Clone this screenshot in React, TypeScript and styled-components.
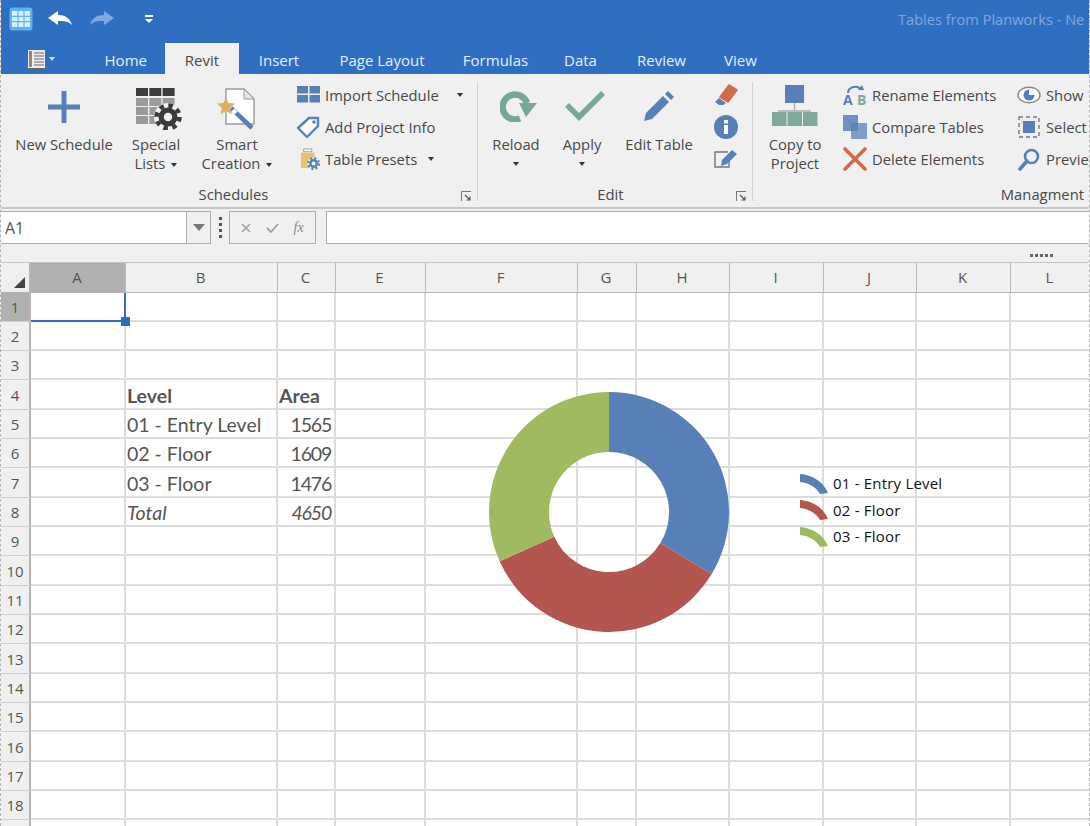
import { styled, createGlobalStyle } from "styled-components";

const GlobalStyle = createGlobalStyle`
  html, body {
    margin: 0;
    padding: 0;
    background: #fff;
  }
  * {
    box-sizing: border-box;
  }
`;

const BLUE = "#5880b6";
const GREEN = "#76a893";

const Window = styled.div`
  width: 1090px;
  height: 826px;
  overflow: hidden;
  display: flex;
  flex-direction: column;
  position: relative;
  border-left: 1px dashed #b4b4b4;
  border-right: 1px dashed #b4b4b4;
  font-family: "Open Sans", "Liberation Sans", sans-serif;
  color: #484848;
`;

const QuickBar = styled.div`
  height: 42px;
  flex: none;
  background: #2f6fc2;
  display: flex;
  align-items: center;
  padding: 0 0 4px 8px;
`;

const QuickSlot = styled.div<{ $w: number }>`
  width: ${(p) => p.$w}px;
  flex: none;
  display: flex;
  align-items: center;
`;

const TitleText = styled.div`
  margin-left: auto;
  width: 191px;
  white-space: nowrap;
  font-size: 14.6px;
  color: #7fa8dc;
`;

const TabBar = styled.div`
  height: 32px;
  flex: none;
  background: #2f6fc2;
  display: flex;
  align-items: flex-end;
  padding-left: 26px;
`;

const FileButton = styled.div`
  width: 59.5px;
  height: 31px;
  flex: none;
  display: flex;
  align-items: center;
  gap: 3px;
`;

const Tab = styled.div<{ $w: number; $active?: boolean }>`
  width: ${(p) => p.$w}px;
  height: 31px;
  flex: none;
  padding-top: 3px;
  display: flex;
  align-items: center;
  justify-content: center;
  font-size: 15px;
  background: ${(p) => (p.$active ? "#f0f0f0" : "transparent")};
  color: ${(p) => (p.$active ? "#4a4a4a" : "#e6eef9")};
`;

const Ribbon = styled.div`
  height: 135px;
  flex: none;
  display: flex;
  background: #f0f0f0;
  border-bottom: 2px solid #c6c6c6;
  font-size: 14.8px;
`;

const Group = styled.div<{ $w: number; $sep?: boolean }>`
  width: ${(p) => p.$w}px;
  flex: none;
  position: relative;
  display: flex;
  flex-direction: column;
  &::after {
    content: "";
    display: ${(p) => (p.$sep ? "block" : "none")};
    position: absolute;
    right: 0;
    top: 8px;
    bottom: 6px;
    width: 1px;
    background: #d2d2d2;
  }
`;

const GroupBody = styled.div<{ $pad: number }>`
  flex: 1;
  display: flex;
  padding-left: ${(p) => p.$pad}px;
`;

const GroupLabel = styled.div<{ $align?: string; $padRight: number }>`
  height: 26px;
  display: flex;
  align-items: center;
  justify-content: ${(p) => p.$align || "center"};
  padding-right: ${(p) => p.$padRight}px;
`;

const Launcher = styled.svg`
  position: absolute;
  right: 6px;
  bottom: 5px;
`;

const BigButton = styled.div<{ $w: number }>`
  width: ${(p) => p.$w}px;
  flex: none;
  display: flex;
  flex-direction: column;
  align-items: center;
  padding-top: 12px;
  line-height: 19px;
  text-align: center;
`;

const BigIcon = styled.div`
  height: 49px;
  display: flex;
  align-items: flex-start;
  justify-content: center;
`;

const BigLabel = styled.div`
  white-space: nowrap;
`;

const Caret = styled.span`
  display: inline-block;
  width: 0;
  height: 0;
  margin-left: 6px;
  vertical-align: 2px;
  border-left: 3.5px solid transparent;
  border-right: 3.5px solid transparent;
  border-top: 4px solid #333;
`;

const WideCaret = styled(Caret)`
  margin-left: 13px;
`;

const BelowCaret = styled(Caret)`
  display: block;
  margin: 8px auto 0;
`;

const SmallColumn = styled.div<{ $w: number; $left: number }>`
  width: ${(p) => p.$w}px;
  margin-left: ${(p) => p.$left}px;
  flex: none;
  display: flex;
  flex-direction: column;
  padding-top: 5px;
`;

const SmallItem = styled.div`
  height: 32px;
  display: flex;
  align-items: center;
  gap: 5px;
  white-space: nowrap;
`;

const SmallIcon = styled.div`
  width: 24px;
  height: 24px;
  flex: none;
  display: flex;
  align-items: center;
  justify-content: center;
`;

const FormulaArea = styled.div`
  height: 53px;
  flex: none;
  background: #f0f0f0;
  padding-top: 2px;
  position: relative;
`;

const FormulaRow = styled.div`
  height: 33px;
  display: flex;
  align-items: stretch;
`;

const NameBox = styled.div`
  width: 186px;
  flex: none;
  background: #fff;
  border: 1px solid #ababab;
  border-left: none;
  display: flex;
  align-items: center;
  padding-left: 4px;
  font-size: 16px;
  color: #555;
`;

const NameDrop = styled.div`
  width: 24px;
  flex: none;
  background: #f0f0f0;
  border: 1px solid #ababab;
  border-left: none;
  display: flex;
  align-items: center;
  justify-content: center;
`;

const Grip = styled.div`
  width: 18px;
  flex: none;
  display: flex;
  flex-direction: column;
  align-items: center;
  justify-content: center;
  gap: 3px;
  & > i {
    width: 3px;
    height: 3px;
    background: #555;
  }
`;

const FxGroup = styled.div`
  width: 87px;
  flex: none;
  border: 1px solid #ababab;
  display: flex;
  align-items: center;
  justify-content: space-around;
  padding: 0 4px;
  color: #a0a0a0;
`;

const FxText = styled.span`
  font-family: "Liberation Serif", serif;
  font-style: italic;
  font-size: 14px;
  color: #8a8a8a;
`;

const FormulaInput = styled.div`
  flex: 1;
  margin-left: 10px;
  background: #fff;
  border: 1px solid #ababab;
  border-right: none;
`;

const Dots = styled.div`
  position: absolute;
  right: 36px;
  bottom: 5px;
  display: flex;
  gap: 2px;
  & > i {
    width: 3px;
    height: 3px;
    background: #666;
  }
`;

const Sheet = styled.div`
  flex: 1;
  position: relative;
  overflow: hidden;
  display: grid;
  grid-template-columns: 30px 95px 152px 58px 90px 152px 59px 93px 94px 93px 94px 80px;
  grid-template-rows: 30.5px;
  grid-auto-rows: 29.33px;
  background: #fff;
`;

const ColHead = styled.div<{ $sel?: boolean }>`
  display: flex;
  align-items: center;
  justify-content: center;
  padding-right: 2px;
  font-size: 15px;
  color: #555;
  border-top: 1px solid #c4c4c4;
  border-right: 1px solid #b9b9b9;
  border-bottom: 1px solid #b4b4b4;
  background: ${(p) => (p.$sel ? "#b0b0b0" : "#f0f0f0")};
`;

const Corner = styled(ColHead)`
  align-items: flex-end;
  justify-content: flex-end;
  padding: 0 4px 4px 0;
  border-right: 2px solid #b4b4b4;
`;

const RowHead = styled.div<{ $sel?: boolean }>`
  display: flex;
  align-items: center;
  justify-content: center;
  font-size: 15px;
  color: #555;
  border-right: 2px solid #b4b4b4;
  border-bottom: 1px solid #d0d0d0;
  background: ${(p) => (p.$sel ? "#b0b0b0" : "#f0f0f0")};
`;

const Cell = styled.div<{ $bold?: boolean; $italic?: boolean; $num?: boolean }>`
  position: relative;
  display: flex;
  align-items: center;
  justify-content: ${(p) => (p.$num ? "flex-end" : "flex-start")};
  padding: 2px 3px 0 1px;
  font-family: Lato, "Open Sans", sans-serif;
  font-size: 19.5px;
  letter-spacing: ${(p) => (p.$num ? "-1.2px" : "0")};
  color: #555;
  font-weight: ${(p) => (p.$bold ? 700 : 400)};
  font-style: ${(p) => (p.$italic ? "italic" : "normal")};
  border-right: 2px solid #dcdcdc;
  border-bottom: 2px solid #dcdcdc;
  white-space: nowrap;
`;

const SelectedCell = styled(Cell)`
  z-index: 2;
  border-right: 2px solid #2f6fc2;
  border-bottom: 2px solid #2f6fc2;
`;

const FillHandle = styled.div`
  position: absolute;
  right: -6px;
  bottom: -6px;
  width: 9px;
  height: 9px;
  background: #2f6fc2;
`;

const Donut = styled.svg`
  position: absolute;
  left: 487px;
  top: 129px;
`;

const Legend = styled.div`
  position: absolute;
  left: 799px;
  top: 208px;
  display: flex;
  flex-direction: column;
`;

const LegendItem = styled.div`
  height: 26.5px;
  display: flex;
  align-items: center;
  gap: 5px;
  font-size: 15px;
  letter-spacing: 0.2px;
  color: #111;
  white-space: nowrap;
`;

/* icons */

function AppIcon() {
  return (
    <svg width="24" height="24" viewBox="0 0 24 24">
      <rect x="0.5" y="0.5" width="23" height="23" rx="3" fill="#5fb4ee" />
      <rect x="3" y="4" width="18" height="16" fill="#d8effc" />
      <path d="M3 9.3H21M3 14.6H21M9 4V20M15 4V20" stroke="#5fb4ee" strokeWidth="1.2" />
    </svg>
  );
}

function ArrowIcon({ flip, color }: { flip?: boolean; color: string }) {
  return (
    <svg width="24" height="16" viewBox="0 0 24 16" style={flip ? { transform: "scaleX(-1)" } : undefined}>
      <path d="M0 7 L10 0 V4 C17 4 22 7 24 14 C20 10 16 10 10 10 V14 Z" fill={color} />
    </svg>
  );
}

function QuickDrop() {
  return (
    <svg width="10" height="10" viewBox="0 0 10 10">
      <rect x="1" y="1" width="8" height="2" fill="#fff" />
      <path d="M1 5H9L5 9Z" fill="#fff" />
    </svg>
  );
}

function FileIcon() {
  return (
    <svg width="19" height="20" viewBox="0 0 19 20">
      <rect x="0.5" y="0.5" width="18" height="19" fill="#eee" stroke="#666" />
      <rect x="2" y="2" width="3" height="16" fill="#888" />
      <path d="M7 4H17M7 7H17M7 10H17M7 13H17M7 16H17" stroke="#666" strokeWidth="1.2" />
    </svg>
  );
}

function PlusIcon() {
  return (
    <svg width="34" height="34" viewBox="0 0 34 34" style={{ marginTop: 4 }}>
      <path d="M14.5 1H19.5V14.5H33V19.5H19.5V33H14.5V19.5H1V14.5H14.5Z" fill={BLUE} />
    </svg>
  );
}

function Gear({ x, y, r, color }: { x: number; y: number; r: number; color: string }) {
  const toothRadius = r * 0.92;
  const tooth = (2 * Math.PI * toothRadius) / 16;
  return (
    <g>
      <circle cx={x} cy={y} r={r * 0.55} fill="none" stroke={color} strokeWidth={r * 0.42} />
      <circle
        cx={x}
        cy={y}
        r={toothRadius}
        fill="none"
        stroke={color}
        strokeWidth={r * 0.36}
        strokeDasharray={`${tooth} ${tooth}`}
      />
    </g>
  );
}

function SpecialListsIcon() {
  const rows = [0, 1, 2, 3];
  const cols = [0, 1, 2];
  return (
    <svg width="46" height="42" viewBox="0 0 46 42" style={{ marginLeft: 6, marginTop: 2 }}>
      {rows.map((r) =>
        cols.map((c) => (
          <rect
            key={`${r}-${c}`}
            x={c * 13.3}
            y={r === 0 ? 0 : r * 9 + 1}
            width="12"
            height="8"
            fill={r === 0 ? "#3c3c3c" : "#9a9a9a"}
          />
        )),
      )}
      <circle cx="32" cy="29" r="14" fill="#f0f0f0" />
      <Gear x={32} y={29} r={12.5} color="#3a3a3a" />
    </svg>
  );
}

function SmartCreationIcon() {
  return (
    <svg width="40" height="42" viewBox="0 0 40 42" style={{ marginTop: 2 }}>
      <path d="M9 1H27L37 11V36H9Z" fill="#fff" stroke="#9a9a9a" strokeWidth="1.4" />
      <path d="M27 1V11H37Z" fill="#e6e6e6" stroke="#9a9a9a" strokeWidth="1" />
      <path d="M14 20L35 40" stroke={BLUE} strokeWidth="4.5" />
      <path d="M16 22L19 25" stroke="#fff" strokeWidth="4.5" />
      <path d="M9 9L11.5 15L18 15.5L13 20L15 26.5L9 23L3.5 26.5L5 20L0 15.5L6.5 15Z" fill="#e0ae62" />
    </svg>
  );
}

function ImportIcon() {
  return (
    <svg width="23" height="17" viewBox="0 0 23 17" style={{ marginTop: -1 }}>
      <rect x="0" y="0" width="11" height="7.5" fill={BLUE} />
      <rect x="12.5" y="0" width="10.5" height="7.5" fill={BLUE} />
      <rect x="0" y="9" width="11" height="7.5" fill={BLUE} />
      <rect x="12.5" y="9" width="10.5" height="7.5" fill={BLUE} />
    </svg>
  );
}

function TagIcon() {
  return (
    <svg width="24" height="24" viewBox="0 0 24 24">
      <path d="M2 13L13 3H22V11L11 22Z" fill="#fff" stroke={BLUE} strokeWidth="2.4" strokeLinejoin="round" />
      <circle cx="18" cy="7" r="1.8" fill={BLUE} />
    </svg>
  );
}

function PresetIcon() {
  return (
    <svg width="22" height="24" viewBox="0 0 22 24" style={{ marginLeft: 4 }}>
      <path d="M4 1H13V4H4Z" fill="#fff" stroke="#999" />
      <path d="M1 5H16V22H1Z" fill="#e8c36f" />
      <circle cx="15" cy="17" r="7" fill="#f0f0f0" />
      <Gear x={15} y={17} r={6.5} color={BLUE} />
    </svg>
  );
}

function Launch() {
  return (
    <Launcher width="11" height="11" viewBox="0 0 11 11">
      <path d="M0.5 10V0.5H10" fill="none" stroke="#777" />
      <path d="M4 4L9 9M9 5.5V9H5.5" fill="none" stroke="#555" strokeWidth="1.2" />
    </Launcher>
  );
}

function ReloadIcon() {
  return (
    <svg width="38" height="32" viewBox="0 0 38 32" style={{ marginTop: 4, marginLeft: 6 }}>
      <path d="M27 13A12.5 12.5 0 1 0 20 28.5" fill="none" stroke={GREEN} strokeWidth="6.5" />
      <path d="M19 13H37L26 27Z" fill={GREEN} />
    </svg>
  );
}

function CheckIcon() {
  return (
    <svg width="40" height="30" viewBox="0 0 40 30" style={{ marginTop: 5, marginLeft: 6 }}>
      <path d="M2 14L14 26L38 2" fill="none" stroke={GREEN} strokeWidth="5.5" />
    </svg>
  );
}

function PencilIcon() {
  return (
    <svg width="32" height="32" viewBox="0 0 32 32" style={{ marginTop: 4 }}>
      <path d="M20 6L26 12L9 29L1 31L3 23Z" fill={BLUE} />
      <path d="M22 4L25 1L31 7L28 10Z" fill={BLUE} />
    </svg>
  );
}

function EraserIcon() {
  return (
    <svg width="24" height="22" viewBox="0 0 24 22">
      <path d="M15 1L23 6L14 18L6 13Z" fill="#d06b4b" stroke="#d06b4b" strokeWidth="1.5" strokeLinejoin="round" />
      <path d="M5 14L12 19L9 21H5L1 18Z" fill={BLUE} />
    </svg>
  );
}

function InfoIcon() {
  return (
    <svg width="24" height="24" viewBox="0 0 24 24">
      <circle cx="12" cy="12" r="12" fill={BLUE} />
      <rect x="10" y="10" width="4" height="9" fill="#fff" />
      <rect x="10" y="5" width="4" height="3.5" fill="#fff" />
    </svg>
  );
}

function EditBoxIcon() {
  return (
    <svg width="24" height="20" viewBox="0 0 24 20">
      <path d="M14 3H1V18H15V11" fill="none" stroke="#777" strokeWidth="1.4" />
      <path d="M8 11L18 1L23 5L13 15L7 17Z" fill={BLUE} />
    </svg>
  );
}

function CopyProjectIcon() {
  return (
    <svg width="46" height="41" viewBox="0 0 46 41" style={{ marginTop: -1 }}>
      <rect x="13" y="0" width="19" height="18" fill={BLUE} />
      <path d="M22.5 18V26M7 31V26H38V31" fill="none" stroke="#aaa" strokeWidth="1.3" />
      <rect x="0" y="27" width="14.5" height="14" fill="#7fa99a" />
      <rect x="15.5" y="27" width="14.5" height="14" fill="#7fa99a" />
      <rect x="31" y="27" width="14.5" height="14" fill="#7fa99a" />
    </svg>
  );
}

function RenameIcon() {
  return (
    <svg width="24" height="22" viewBox="0 0 24 22">
      <path d="M5 9C5 3 15 0 18 6" fill="none" stroke={BLUE} strokeWidth="2" />
      <path d="M15 6H21L19 1Z" fill={BLUE} />
      <text x="0" y="21" fontFamily="Open Sans, sans-serif" fontWeight="700" fontSize="14" fill={BLUE}>
        A
      </text>
      <text x="14" y="21" fontFamily="Open Sans, sans-serif" fontWeight="700" fontSize="14" fill="#7fa99a">
        B
      </text>
    </svg>
  );
}

function CompareIcon() {
  return (
    <svg width="24" height="24" viewBox="0 0 24 24">
      <rect x="0" y="0" width="15" height="16" fill={BLUE} opacity="0.85" />
      <rect x="8" y="8" width="16" height="16" fill={BLUE} opacity="0.75" />
    </svg>
  );
}

function DeleteIcon() {
  return (
    <svg width="24" height="24" viewBox="0 0 24 24">
      <path d="M2 2L22 22M22 2L2 22" stroke="#d06b4b" strokeWidth="3.6" strokeLinecap="round" />
    </svg>
  );
}

function EyeIcon() {
  return (
    <svg width="24" height="18" viewBox="0 0 24 18">
      <ellipse cx="12" cy="9" rx="11" ry="7.8" fill="#fff" stroke="#888" strokeWidth="1.4" />
      <circle cx="12" cy="9" r="5.5" fill={BLUE} />
      <path d="M12 9V3.5A5.5 5.5 0 0 1 17.5 9Z" fill="#fff" />
    </svg>
  );
}

function SelectIcon() {
  return (
    <svg width="22" height="22" viewBox="0 0 22 22">
      <rect x="1" y="1" width="20" height="20" fill="none" stroke="#777" strokeWidth="1.4" strokeDasharray="4 3" />
      <rect x="5" y="5" width="12" height="12" fill={BLUE} />
    </svg>
  );
}

function MagnifierIcon() {
  return (
    <svg width="22" height="23" viewBox="0 0 22 23">
      <circle cx="13.5" cy="8.5" r="6.5" fill="none" stroke={BLUE} strokeWidth="2.6" />
      <path d="M9 13L2 21" stroke={BLUE} strokeWidth="3.6" strokeLinecap="round" />
    </svg>
  );
}

function LegendArc({ color }: { color: string }) {
  return (
    <svg width="28" height="21" viewBox="0 0 28 21">
      <path d="M0 1C12 2 23 8 28 20L20 21C16 14 9 10 0 9Z" fill={color} />
    </svg>
  );
}

/* data */

const tabs = [
  { name: "Home", w: 78.5 },
  { name: "Revit", w: 74, active: true },
  { name: "Insert", w: 80 },
  { name: "Page Layout", w: 126 },
  { name: "Formulas", w: 101 },
  { name: "Data", w: 69 },
  { name: "Review", w: 93 },
  { name: "View", w: 65 },
];

const columns = ["A", "B", "C", "E", "F", "G", "H", "I", "J", "K", "L"];

const tableRows: Record<number, { b: string; c: string; bold?: boolean; italic?: boolean; num?: boolean }> = {
  4: { b: "Level", c: "Area", bold: true },
  5: { b: "01 - Entry Level", c: "1565", num: true },
  6: { b: "02 - Floor", c: "1609", num: true },
  7: { b: "03 - Floor", c: "1476", num: true },
  8: { b: "Total", c: "4650", num: true, italic: true },
};

const slices = [
  { name: "01 - Entry Level", value: 1565, color: "#5880b8" },
  { name: "02 - Floor", value: 1609, color: "#b2564f" },
  { name: "03 - Floor", value: 1476, color: "#a0ba62" },
];

function slicePath(start: number, end: number) {
  const c = 121;
  const R = 120;
  const r = 60;
  const pt = (rad: number, a: number) => `${c + rad * Math.sin(a)} ${c - rad * Math.cos(a)}`;
  const large = end - start > Math.PI ? 1 : 0;
  return `M${pt(R, start)}A${R} ${R} 0 ${large} 1 ${pt(R, end)}L${pt(r, end)}A${r} ${r} 0 ${large} 0 ${pt(r, start)}Z`;
}

function DonutChart() {
  const total = slices.reduce((s, x) => s + x.value, 0);
  let angle = 0;
  return (
    <Donut width="242" height="242" viewBox="0 0 242 242">
      {slices.map((s) => {
        const start = angle;
        angle += (s.value / total) * Math.PI * 2;
        return <path key={s.name} d={slicePath(start, angle)} fill={s.color} />;
      })}
    </Donut>
  );
}

function SheetGrid() {
  const rows = Array.from({ length: 19 }, (_, i) => i + 1);
  return (
    <Sheet>
      <Corner>
        <svg width="11" height="11" viewBox="0 0 11 11">
          <path d="M11 0V11H0Z" fill="#444" />
        </svg>
      </Corner>
      {columns.map((c) => (
        <ColHead key={c} $sel={c === "A"}>
          {c}
        </ColHead>
      ))}
      {rows.map((r) => {
        const data = tableRows[r];
        return [
          <RowHead key={`h${r}`} $sel={r === 1}>
            {r < 19 ? r : ""}
          </RowHead>,
          ...columns.map((c) => {
            if (r === 1 && c === "A") {
              return (
                <SelectedCell key="A1">
                  <FillHandle />
                </SelectedCell>
              );
            }
            const text = data && c === "B" ? data.b : data && c === "C" ? data.c : "";
            return (
              <Cell
                key={`${c}${r}`}
                $bold={data?.bold}
                $italic={data?.italic}
                $num={c === "C" && data?.num}
              >
                {text}
              </Cell>
            );
          }),
        ];
      })}
      <DonutChart />
      <Legend>
        {slices.map((s) => (
          <LegendItem key={s.name}>
            <LegendArc color={s.color} />
            {s.name}
          </LegendItem>
        ))}
      </Legend>
    </Sheet>
  );
}

export default function App() {
  return (
    <>
      <GlobalStyle />
      <Window>
        <QuickBar>
          <QuickSlot $w={39}>
            <AppIcon />
          </QuickSlot>
          <QuickSlot $w={42}>
            <ArrowIcon color="#ffffff" />
          </QuickSlot>
          <QuickSlot $w={54}>
            <ArrowIcon flip color="#7fa8dc" />
          </QuickSlot>
          <QuickSlot $w={20}>
            <QuickDrop />
          </QuickSlot>
          <TitleText>Tables from Planworks - Ne</TitleText>
        </QuickBar>
        <TabBar>
          <FileButton>
            <FileIcon />
            <svg width="6" height="4" viewBox="0 0 6 4">
              <path d="M0 0H6L3 4Z" fill="#ddd" />
            </svg>
          </FileButton>
          {tabs.map((t) => (
            <Tab key={t.name} $w={t.w} $active={t.active}>
              {t.name}
            </Tab>
          ))}
        </TabBar>
        <Ribbon>
          <Group $w={477} $sep>
            <GroupBody $pad={7}>
              <BigButton $w={112}>
                <BigIcon>
                  <PlusIcon />
                </BigIcon>
                <BigLabel>New Schedule</BigLabel>
              </BigButton>
              <BigButton $w={72}>
                <BigIcon>
                  <SpecialListsIcon />
                </BigIcon>
                <BigLabel>
                  Special
                  <br />
                  Lists
                  <Caret />
                </BigLabel>
              </BigButton>
              <BigButton $w={90}>
                <BigIcon>
                  <SmartCreationIcon />
                </BigIcon>
                <BigLabel>
                  Smart
                  <br />
                  Creation
                  <Caret />
                </BigLabel>
              </BigButton>
              <SmallColumn $w={180} $left={14}>
                <SmallItem>
                  <SmallIcon>
                    <ImportIcon />
                  </SmallIcon>
                  Import Schedule
                  <WideCaret />
                </SmallItem>
                <SmallItem>
                  <SmallIcon>
                    <TagIcon />
                  </SmallIcon>
                  Add Project Info
                </SmallItem>
                <SmallItem>
                  <SmallIcon>
                    <PresetIcon />
                  </SmallIcon>
                  Table Presets
                  <Caret />
                </SmallItem>
              </SmallColumn>
            </GroupBody>
            <GroupLabel $padRight={12}>Schedules</GroupLabel>
            <Launch />
          </Group>
          <Group $w={275} $sep>
            <GroupBody $pad={0}>
              <BigButton $w={76}>
                <BigIcon>
                  <ReloadIcon />
                </BigIcon>
                <BigLabel>
                  Reload
                  <BelowCaret />
                </BigLabel>
              </BigButton>
              <BigButton $w={56}>
                <BigIcon>
                  <CheckIcon />
                </BigIcon>
                <BigLabel>
                  Apply
                  <BelowCaret />
                </BigLabel>
              </BigButton>
              <BigButton $w={98}>
                <BigIcon>
                  <PencilIcon />
                </BigIcon>
                <BigLabel>Edit Table</BigLabel>
              </BigButton>
              <SmallColumn $w={30} $left={6}>
                <SmallItem>
                  <SmallIcon>
                    <EraserIcon />
                  </SmallIcon>
                </SmallItem>
                <SmallItem>
                  <SmallIcon>
                    <InfoIcon />
                  </SmallIcon>
                </SmallItem>
                <SmallItem>
                  <SmallIcon>
                    <EditBoxIcon />
                  </SmallIcon>
                </SmallItem>
              </SmallColumn>
            </GroupBody>
            <GroupLabel $padRight={10}>Edit</GroupLabel>
            <Launch />
          </Group>
          <Group $w={336}>
            <GroupBody $pad={0}>
              <BigButton $w={84}>
                <BigIcon>
                  <CopyProjectIcon />
                </BigIcon>
                <BigLabel>
                  Copy to
                  <br />
                  Project
                </BigLabel>
              </BigButton>
              <SmallColumn $w={174} $left={6}>
                <SmallItem>
                  <SmallIcon>
                    <RenameIcon />
                  </SmallIcon>
                  Rename Elements
                </SmallItem>
                <SmallItem>
                  <SmallIcon>
                    <CompareIcon />
                  </SmallIcon>
                  Compare Tables
                </SmallItem>
                <SmallItem>
                  <SmallIcon>
                    <DeleteIcon />
                  </SmallIcon>
                  Delete Elements
                </SmallItem>
              </SmallColumn>
              <SmallColumn $w={80} $left={0}>
                <SmallItem>
                  <SmallIcon>
                    <EyeIcon />
                  </SmallIcon>
                  Show
                </SmallItem>
                <SmallItem>
                  <SmallIcon>
                    <SelectIcon />
                  </SmallIcon>
                  Select
                </SmallItem>
                <SmallItem>
                  <SmallIcon>
                    <MagnifierIcon />
                  </SmallIcon>
                  Preview
                </SmallItem>
              </SmallColumn>
            </GroupBody>
            <GroupLabel $align="flex-end" $padRight={5}>
              Managment
            </GroupLabel>
          </Group>
        </Ribbon>
        <FormulaArea>
          <FormulaRow>
            <NameBox>A1</NameBox>
            <NameDrop>
              <svg width="12" height="7" viewBox="0 0 12 7">
                <path d="M0 0H12L6 7Z" fill="#777" />
              </svg>
            </NameDrop>
            <Grip>
              <i />
              <i />
              <i />
              <i />
            </Grip>
            <FxGroup>
              <svg width="10" height="10" viewBox="0 0 10 10">
                <path d="M1 1L9 9M9 1L1 9" stroke="#a0a0a0" strokeWidth="1.6" />
              </svg>
              <svg width="13" height="10" viewBox="0 0 13 10">
                <path d="M1 5L5 9L12 1" fill="none" stroke="#a0a0a0" strokeWidth="1.8" />
              </svg>
              <FxText>fx</FxText>
            </FxGroup>
            <FormulaInput />
          </FormulaRow>
          <Dots>
            <i />
            <i />
            <i />
            <i />
            <i />
          </Dots>
        </FormulaArea>
        <SheetGrid />
      </Window>
    </>
  );
}
